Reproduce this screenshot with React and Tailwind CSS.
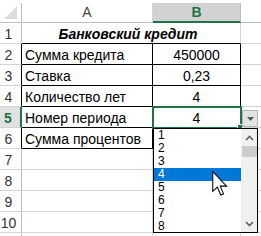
import React from "react";

const rows = [
  { n: 1, a: "Банковский кредит", merged: true },
  { n: 2, a: "Сумма кредита", b: "450000", boxed: true },
  { n: 3, a: "Ставка", b: "0,23", boxed: true },
  { n: 4, a: "Количество лет", b: "4", boxed: true },
  { n: 5, a: "Номер периода", b: "4", boxed: true, active: true },
  { n: 6, a: "Сумма процентов", b: "", boxed: true },
  { n: 7 },
  { n: 8 },
  { n: 9 },
  { n: 10 },
  { n: 11, hidden: true },
];

const items = ["1", "2", "3", "4", "5", "6", "7", "8"];

function RowHeader({ row }) {
  const border = row.active
    ? "border-r-2 border-r-[#217346]"
    : row.boxed
    ? "border-r border-r-black"
    : "border-r border-r-[#bfbfbf]";
  return (
    <div
      className={`h-[21px] border-b border-b-[#d4d4d4] ${border} flex items-end justify-center pr-[4px] pb-[2px] text-[14px] leading-none ${
        row.active ? "bg-[#e1e1e1] text-[#217346] font-bold" : "text-[#333]"
      }`}
    >
      {row.hidden ? "" : row.n}
    </div>
  );
}

function Row({ row }) {
  if (row.merged) {
    return (
      <>
        <RowHeader row={row} />
        <div className="col-span-2 h-[21px] border-b border-b-black border-r border-r-[#d4d4d4] flex items-end justify-center pb-[2px] pr-[6px] text-[14px] leading-none font-bold italic text-black">
          {row.a}
        </div>
        <div className="h-[21px] border-b border-b-[#d4d4d4]" />
      </>
    );
  }
  const cellBorder = row.boxed
    ? "border-r border-b border-black"
    : "border-r border-b border-[#d4d4d4]";
  return (
    <>
      <RowHeader row={row} />
      <div className={`h-[21px] ${cellBorder} flex items-end pl-[3px] pb-[2px] text-[14px] leading-none text-black whitespace-nowrap`}>
        {row.a}
      </div>
      <div className={`h-[21px] ${cellBorder} flex items-end justify-center pb-[2px] text-[14px] leading-none text-black`}>
        {row.b}
      </div>
      <div className="h-[21px] border-b border-b-[#d4d4d4]" />
    </>
  );
}

function Cursor() {
  return (
    <svg width="16" height="25" viewBox="0 0 12 19" className="absolute left-[212px] top-[171px]">
      <path
        d="M0.5 0.5 L0.5 15.5 L4 12.2 L6.6 18.3 L8.7 17.4 L6.2 11.5 L11 11.5 Z"
        fill="white"
        stroke="black"
        strokeWidth="0.8"
        strokeLinejoin="miter"
      />
    </svg>
  );
}

export default function App() {
  return (
    <div
      className="relative w-[261px] h-[236px] overflow-hidden bg-white pt-[3px]"
      style={{ fontFamily: '"Liberation Sans", Arial, sans-serif' }}
    >
      <div className="grid grid-cols-[22px_131px_88px_20px]">
        {/* column headers */}
        <div className="h-[20px] border-r border-r-[#bfbfbf] border-b border-b-[#bfbfbf] relative">
          <svg width="13" height="13" className="absolute right-[4px] bottom-[3px]">
            <polygon points="13,0 13,13 0,13" fill="#dcdcdc" />
          </svg>
        </div>
        <div className="h-[20px] border-r border-r-[#d4d4d4] border-b border-b-[#bfbfbf] flex items-center justify-center text-[14px] text-[#444]">
          A
        </div>
        <div className="h-[20px] border-r border-r-[#bfbfbf] border-b-2 border-b-[#217346] bg-[#d2d2d2] flex items-center justify-center text-[14px] font-bold text-[#217346]">
          B
        </div>
        <div className="h-[20px] border-b border-b-[#bfbfbf]" />

        {rows.map((row) => (
          <Row key={row.n} row={row} />
        ))}
      </div>

      {/* active cell */}
      <div className="absolute left-[152px] top-[106px] w-[90px] h-[23px] border-2 border-[#217346]" />
      <div className="absolute left-[237px] top-[124px] w-[6px] h-[6px] bg-[#217346] border border-white" />

      {/* dropdown button */}
      <div className="absolute left-[242px] top-[110px] w-[16px] h-[17px] bg-[#e3e3e3] border border-[#b4b4b4] flex items-center justify-center">
        <svg width="7" height="4" viewBox="0 0 7 4">
          <polygon points="0,0 7,0 3.5,4" fill="#555" />
        </svg>
      </div>

      {/* dropdown list */}
      <div className="absolute left-[153px] top-[128px] w-[105px] h-[105px] border border-black bg-white flex">
        <div className="flex-1 flex flex-col">
          {items.map((it) => (
            <div
              key={it}
              className={`h-[13px] flex items-center pl-[4px] text-[12px] leading-none ${
                it === "4" ? "bg-[#0078d7] text-white" : "text-black"
              }`}
            >
              {it}
            </div>
          ))}
        </div>
        <div className="w-[16px] bg-[#f0f0f0] flex flex-col items-center">
          <svg width="9" height="6" viewBox="0 0 9 6" className="mt-[6px]">
            <path d="M1 5 L4.5 1.5 L8 5" fill="none" stroke="#606060" strokeWidth="1.6" />
          </svg>
          <div className="mt-[5px] w-[15px] h-[11px] bg-[#cdcdcd]" />
          <div className="flex-1" />
          <svg width="9" height="6" viewBox="0 0 9 6" className="mb-[5px]">
            <path d="M1 1 L4.5 4.5 L8 1" fill="none" stroke="#606060" strokeWidth="1.6" />
          </svg>
        </div>
      </div>

      <Cursor />
    </div>
  );
}
